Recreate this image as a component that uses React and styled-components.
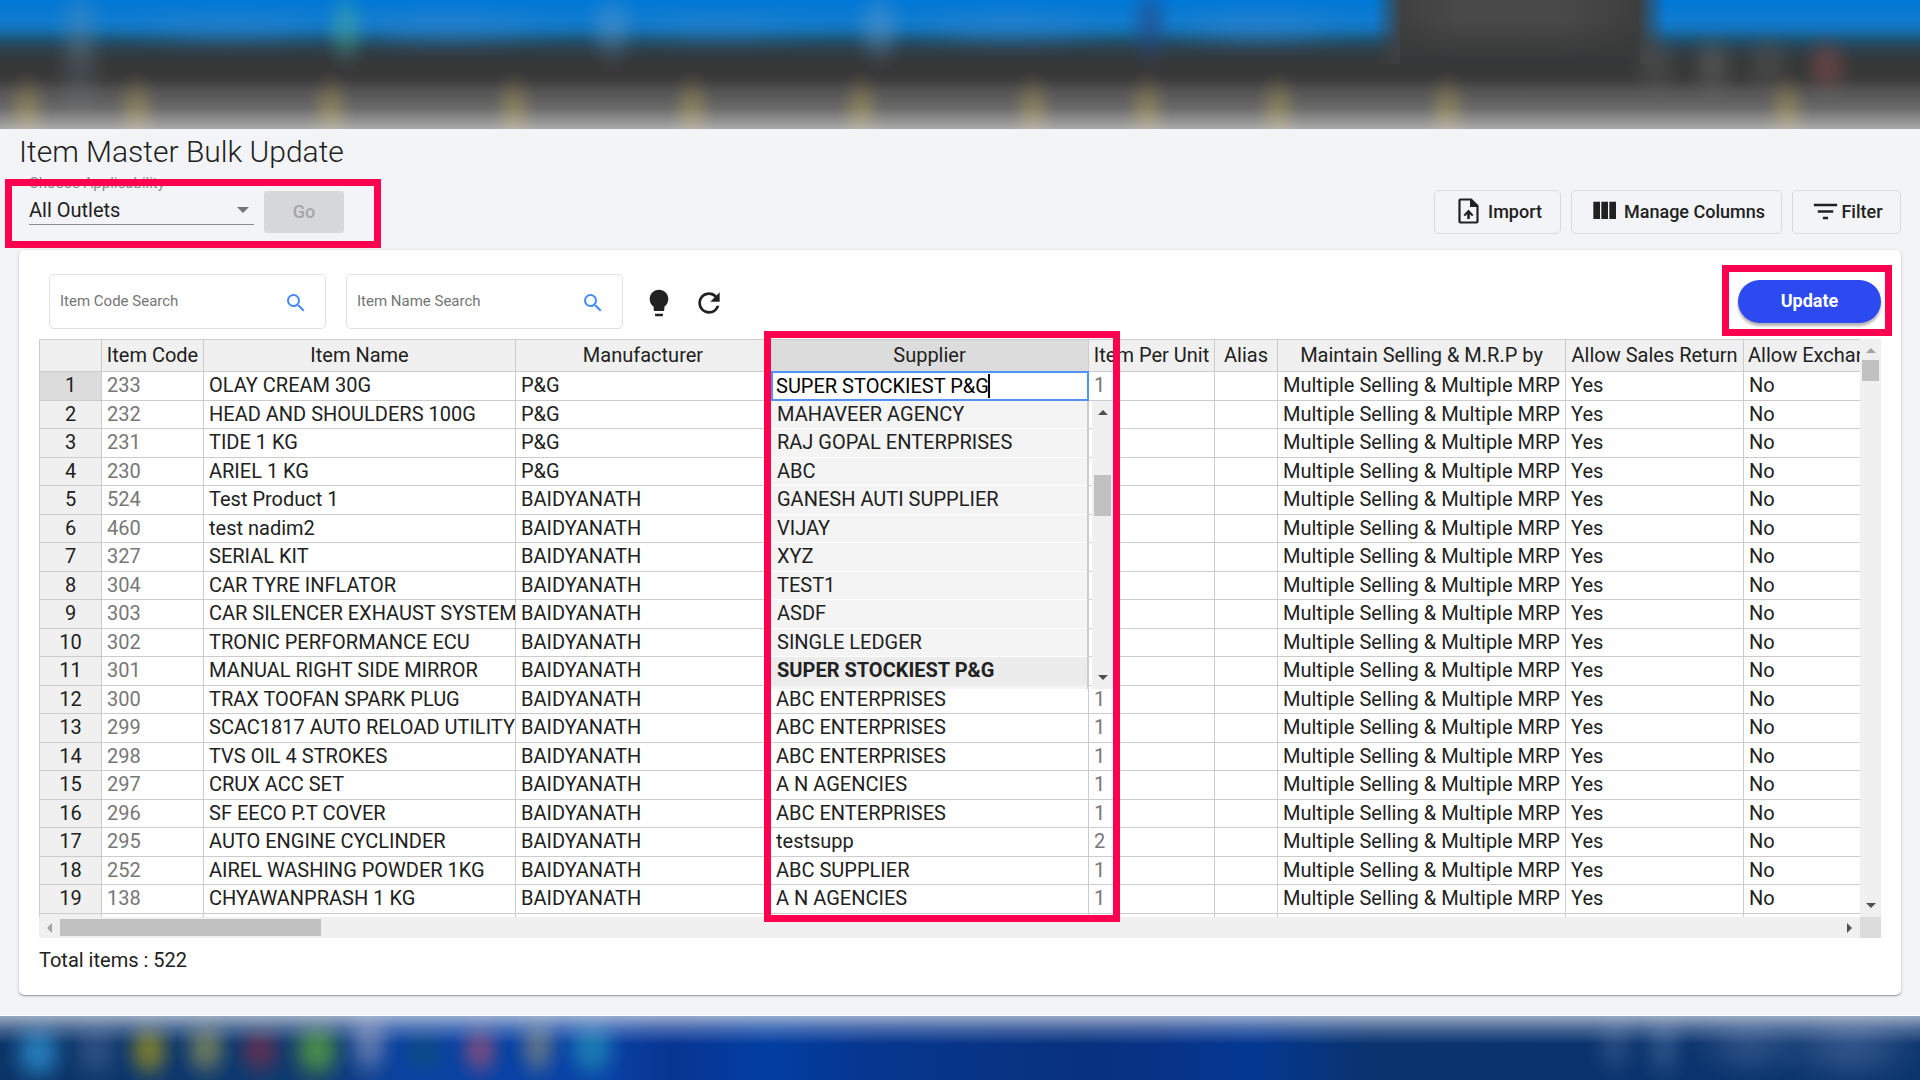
import React from 'react';
import styled, { createGlobalStyle, css } from 'styled-components';
import { MdSearch, MdRefresh, MdFilterList } from 'react-icons/md';

const GlobalStyle = createGlobalStyle`
  *, *::before, *::after { box-sizing: border-box; }
  body {
    margin: 0;
    background: #f3f4f7;
    color: #212121;
    font-family: Roboto, "Liberation Sans", sans-serif;
    font-size: 20px;
  }
  button, input, select { font-family: inherit; margin: 0; }
`;

const glow = (x, y, rx, ry, color) =>
  `radial-gradient(ellipse ${rx}px ${ry}px at ${x}px ${y}px, ${color} 0%, color-mix(in srgb, ${color} 80%, transparent) 30%, color-mix(in srgb, ${color} 25%, transparent) 70%, transparent 100%)`;

const bookmarks = [27, 137, 331, 514, 692, 861, 1033, 1147, 1278, 1447, 1787]
  .map((x) => glow(x, 112, 24, 42, 'rgba(145, 125, 55, 0.52)'))
  .join(',');

const tabGlows = [
  glow(80, 40, 30, 80, 'rgba(120, 150, 170, 0.28)'),
  glow(346, 28, 26, 46, 'rgba(80, 180, 150, 0.4)'),
  glow(612, 28, 30, 44, 'rgba(110, 155, 200, 0.36)'),
  glow(879, 28, 30, 44, 'rgba(110, 155, 200, 0.4)'),
  glow(1150, 24, 26, 50, 'rgba(40, 70, 130, 0.55)'),
  glow(230, 28, 130, 30, 'rgba(70, 140, 210, 0.22)'),
  glow(450, 28, 130, 30, 'rgba(70, 140, 210, 0.28)'),
  glow(720, 28, 120, 30, 'rgba(70, 140, 210, 0.18)'),
  glow(1010, 28, 120, 30, 'rgba(70, 140, 210, 0.26)'),
  glow(1260, 28, 110, 30, 'rgba(70, 140, 210, 0.3)'),
  glow(1656, 62, 28, 38, 'rgba(110, 110, 110, 0.26)'),
  glow(1713, 64, 28, 38, 'rgba(120, 120, 120, 0.34)'),
  glow(1768, 62, 28, 38, 'rgba(110, 110, 110, 0.26)'),
  glow(1827, 66, 28, 36, 'rgba(140, 80, 80, 0.48)'),
].join(',');

const BrowserHaze = styled.div`
  height: 129px;
  background:
    linear-gradient(to bottom, transparent 80px, rgba(255, 255, 255, 0.18) 108px, rgba(255, 255, 255, 0.52) 129px),
    ${tabGlows},
    ${bookmarks},
    linear-gradient(to bottom, transparent 20px, #353637 64px) 1400px 0 / 240px 64px no-repeat,
    linear-gradient(to right, transparent 1374px, #404040 1402px, #494949 1460px, #494949 1560px, #3e3e3e 1638px, transparent 1666px) 0 0 / 100% 64px no-repeat,
    linear-gradient(to bottom, #0078d7 0, #0f7bcf 20px, #1272b9 29px, #20516f 41px, #2e3f4b 50px, #353738 62px, #383838 72px, #474747 92px, #4c4c4c 129px);
`;

const taskIcons = [
  glow(38, 36, 34, 40, 'rgba(45, 145, 210, 0.75)'),
  glow(96, 34, 32, 38, 'rgba(90, 110, 160, 0.4)'),
  glow(149, 34, 30, 38, 'rgba(150, 140, 35, 0.75)'),
  glow(206, 32, 30, 38, 'rgba(150, 150, 90, 0.65)'),
  glow(260, 34, 30, 34, 'rgba(120, 45, 75, 0.68)'),
  glow(317, 34, 34, 40, 'rgba(90, 165, 60, 0.75)'),
  glow(369, 26, 30, 44, 'rgba(130, 145, 190, 0.65)'),
  glow(424, 34, 30, 30, 'rgba(15, 80, 120, 0.6)'),
  glow(480, 34, 28, 36, 'rgba(150, 80, 120, 0.7)'),
  glow(538, 30, 28, 40, 'rgba(120, 130, 130, 0.7)'),
  glow(592, 32, 34, 40, 'rgba(35, 145, 185, 0.7)'),
  glow(1615, 28, 28, 40, 'rgba(80, 110, 160, 0.35)'),
  glow(1664, 28, 28, 44, 'rgba(80, 110, 160, 0.45)'),
  glow(1750, 28, 64, 40, 'rgba(80, 110, 160, 0.45)'),
  glow(1850, 28, 80, 48, 'rgba(80, 110, 160, 0.55)'),
].join(',');

const TaskbarHaze = styled.footer`
  height: 65px;
  border-top: 1px solid #fff;
  background:
    linear-gradient(to bottom, rgba(205, 213, 225, 0.72) 0, rgba(190, 200, 225, 0.35) 13px, transparent 28px),
    ${taskIcons},
    linear-gradient(to right, #0b3569 0, #103b70 320px, #0a42a0 400px, #0842a6 600px, #083592 670px, #023ea3 770px, #06368f 870px, #08327e 1080px, #083286 1160px, #033893 1250px, #0a336e 1370px, #0b356d 1920px);
`;

const Page = styled.main`
  padding: 5px 19px 20px;
`;

const Title = styled.h1`
  margin: 0 0 2px;
  font-size: 30px;
  line-height: 36px;
  font-weight: 300;
`;

const ActionBar = styled.div`
  display: flex;
  justify-content: space-between;
  align-items: flex-end;
  padding: 0 0 16px;
`;

const Applicability = styled.div`
  position: relative;
  display: flex;
  align-items: flex-end;
  gap: 10px;
  padding: 0 0 1px 10px;
`;

const SelectField = styled.div`
  position: relative;
  width: 225px;
  height: 53px;
  margin-bottom: 8px;
  display: flex;
  flex-direction: column;
  justify-content: space-between;
  border-bottom: 1px solid #8b8c8e;

  &::after {
    content: '';
    position: absolute;
    right: 5px;
    bottom: 11px;
    border: 6px solid transparent;
    border-top-color: #757575;
    border-bottom: 0;
  }
`;

const SelectLabel = styled.label`
  font-size: 15px;
  line-height: 22px;
  color: #8c8c8e;
`;

const Select = styled.select`
  appearance: none;
  width: 100%;
  height: 28px;
  padding: 0;
  border: 0;
  background: transparent;
  color: #212121;
  font-size: 20px;
`;

const Callout = styled.div`
  position: absolute;
  z-index: 5;
  border: 7px solid #ff0050;
  pointer-events: none;
  top: ${(p) => p.$top}px;
  left: ${(p) => p.$left}px;
  width: ${(p) => p.$width}px;
  height: ${(p) => p.$height}px;
`;

const GoButton = styled.button`
  width: 80px;
  height: 42px;
  padding: 0 0 2px;
  border: 0;
  border-radius: 4px;
  background: #d6d7d9;
  color: #a4a5a7;
  font-size: 18px;
  font-weight: 500;
`;

const Actions = styled.div`
  display: flex;
  gap: 10px;
`;

const OutlineButton = styled.button`
  display: flex;
  align-items: center;
  justify-content: center;
  gap: ${(p) => p.$gap}px;
  height: 44px;
  width: ${(p) => p.$width}px;
  padding: 0 0 2px ${(p) => p.$inset || 0}px;
  border: 1px solid #d8d9dc;
  border-radius: 5px;
  background: transparent;
  color: #212121;
  font-size: 18px;
  font-weight: 500;
`;

const Card = styled.section`
  padding: 24px 20px 20px;
  border-radius: 5px;
  background: #fff;
  box-shadow: 0 1px 1px rgba(0, 0, 0, 0.3), 0 1px 4px rgba(0, 0, 0, 0.14);
`;

const Toolbar = styled.div`
  display: flex;
  align-items: center;
  height: 55px;
  margin-bottom: 10px;
  padding-left: 10px;
`;

const SearchBox = styled.label`
  display: flex;
  align-items: center;
  width: 277px;
  height: 55px;
  margin-right: 20px;
  padding: 0 17px 0 10px;
  border: 1px solid #e0e0e0;
  border-radius: 5px;
  color: #448aff;

  input {
    flex: 1;
    min-width: 0;
    padding: 0 0 2px;
    border: 0;
    outline: 0;
    background: transparent;
    font-size: 15px;
    color: #212121;
  }
  input::placeholder { color: #757575; opacity: 1; }
  svg { margin-top: 2px; }
`;

const IconButton = styled.button`
  display: flex;
  padding: 2px 0 0;
  margin-right: 18px;
  border: 0;
  background: transparent;
  color: #212121;
`;

const UpdateSlot = styled.div`
  position: relative;
  margin-left: auto;
`;

const UpdateButton = styled.button`
  display: block;
  width: 143px;
  height: 43px;
  padding: 0 0 2px;
  border: 0;
  border-radius: 22px;
  background: #2d49f0;
  color: #fff;
  font-size: 18px;
  font-weight: 700;
  box-shadow: 0 3px 3px rgba(0, 0, 0, 0.3);
`;

const GridShell = styled.div`
  position: relative;
  display: grid;
  grid-template-columns: minmax(0, 1fr) 21px;
  grid-template-rows: 578px 21px;
`;

const Viewport = styled.div`
  overflow: hidden;
  border: solid #ccc;
  border-width: 1px 0 0 1px;
`;

const Table = styled.table`
  width: 1847px;
  table-layout: fixed;
  border-collapse: separate;
  border-spacing: 0;
  line-height: 24px;
`;

const cell = css`
  padding: 0 0 2px 5px;
  border: solid #ccc;
  border-width: 0 1px 1px 0;
  font-weight: 400;
  white-space: nowrap;
  overflow: hidden;
`;

const HeadCell = styled.th`
  ${cell}
  padding: 0 4px 2px;
  height: 32px;
  background: ${(p) => (p.$active ? '#dcdcdc' : '#f0f0f0')};
`;

const RowHead = styled.th`
  ${cell}
  padding: 0 0 2px;
  background: ${(p) => (p.$active ? '#dcdcdc' : '#f0f0f0')};
`;

const Cell = styled.td`
  ${cell}
  color: ${(p) => (p.$muted ? '#777' : '#212121')};
`;

const EditingCell = styled.td`
  ${cell}
  position: relative;
  overflow: visible;
  padding: 0;
`;

const Row = styled.tr`
  height: 28px;
  &:nth-child(odd) { height: 29px; }
`;

const CellEditor = styled.input`
  position: absolute;
  inset: -1px -1px -1px 0;
  width: 318px;
  height: 30px;
  padding: 0 3px;
  border: 2px solid #5292f7;
  outline: 0;
  background: #fff;
  color: #000;
  caret-color: transparent;
  font-size: 20px;
`;

const Caret = styled.span`
  position: absolute;
  top: 2px;
  left: 217px;
  width: 2px;
  height: 24px;
  background: #000;
`;

const Dropdown = styled.div`
  position: absolute;
  z-index: 3;
  top: 29px;
  left: 0;
  display: flex;
  gap: 3px;
`;

const Options = styled.ul`
  width: 318px;
  margin: 0;
  padding: 0 0 3px;
  list-style: none;
  background: #f4f4f4;
  border-right: 2px solid #ccc;
`;

const Option = styled.li`
  height: 29px;
  padding: 1px 6px 0;
  line-height: 24px;
  border-bottom: 1px solid ${(p) => (p.$selected ? '#ececec' : '#fff')};
  background: ${(p) => (p.$selected ? '#ececec' : '#f4f4f4')};
  font-weight: ${(p) => (p.$selected ? 700 : 400)};
  &:nth-child(odd) { height: 28px; }
`;

const Track = styled.div`
  display: flex;
  flex-direction: ${(p) => (p.$horizontal ? 'row' : 'column')};
  align-items: center;
  justify-content: space-between;
  background: #f0f0f0;
  ${(p) => (p.$horizontal ? 'padding: 0 8px;' : 'width: 21px; padding: 9px 0;')}
`;

const Thumb = styled.div`
  background: #c1c1c1;
  width: ${(p) => p.$width}px;
  height: ${(p) => p.$height}px;
  margin: ${(p) => p.$margin};
`;

const arrows = {
  up: 'border-width: 0 5px 5px; border-bottom-color: currentColor;',
  down: 'border-width: 5px 5px 0; border-top-color: currentColor;',
  left: 'border-width: 5px 5px 5px 0; border-right-color: currentColor;',
  right: 'border-width: 5px 0 5px 5px; border-left-color: currentColor;',
};

const Arrow = styled.span`
  width: 0;
  height: 0;
  color: ${(p) => (p.$dim ? '#a3a3a3' : '#505050')};
  border: 0 solid transparent;
  ${(p) => arrows[p.$dir]}
`;

const Corner = styled.div`
  background: #dcdcdc;
`;

const Total = styled.p`
  margin: 8px 0 1px;
  line-height: 28px;
`;

const columns = [
  ['', 62],
  ['Item Code', 102],
  ['Item Name', 312],
  ['Manufacturer', 255],
  ['Supplier', 318],
  ['Item Per Unit', 126],
  ['Alias', 63],
  ['Maintain Selling & M.R.P by', 288],
  ['Allow Sales Return', 178],
  ['Allow Exchange', 143],
];

const items = [
  ['233', 'OLAY CREAM 30G', 'P&G', 'SUPER STOCKIEST P&G', '1'],
  ['232', 'HEAD AND SHOULDERS 100G', 'P&G', '', ''],
  ['231', 'TIDE 1 KG', 'P&G', '', ''],
  ['230', 'ARIEL 1 KG', 'P&G', '', ''],
  ['524', 'Test Product 1', 'BAIDYANATH', '', ''],
  ['460', 'test nadim2', 'BAIDYANATH', '', ''],
  ['327', 'SERIAL KIT', 'BAIDYANATH', '', ''],
  ['304', 'CAR TYRE INFLATOR', 'BAIDYANATH', '', ''],
  ['303', 'CAR SILENCER EXHAUST SYSTEM', 'BAIDYANATH', '', ''],
  ['302', 'TRONIC PERFORMANCE ECU', 'BAIDYANATH', '', ''],
  ['301', 'MANUAL RIGHT SIDE MIRROR', 'BAIDYANATH', '', ''],
  ['300', 'TRAX TOOFAN SPARK PLUG', 'BAIDYANATH', 'ABC ENTERPRISES', '1'],
  ['299', 'SCAC1817 AUTO RELOAD UTILITY', 'BAIDYANATH', 'ABC ENTERPRISES', '1'],
  ['298', 'TVS OIL 4 STROKES', 'BAIDYANATH', 'ABC ENTERPRISES', '1'],
  ['297', 'CRUX ACC SET', 'BAIDYANATH', 'A N AGENCIES', '1'],
  ['296', 'SF EECO P.T COVER', 'BAIDYANATH', 'ABC ENTERPRISES', '1'],
  ['295', 'AUTO ENGINE CYCLINDER', 'BAIDYANATH', 'testsupp', '2'],
  ['252', 'AIREL WASHING POWDER 1KG', 'BAIDYANATH', 'ABC SUPPLIER', '1'],
  ['138', 'CHYAWANPRASH 1 KG', 'BAIDYANATH', 'A N AGENCIES', '1'],
];

const suppliers = [
  'MAHAVEER AGENCY',
  'RAJ GOPAL ENTERPRISES',
  'ABC',
  'GANESH AUTI SUPPLIER',
  'VIJAY',
  'XYZ',
  'TEST1',
  'ASDF',
  'SINGLE LEDGER',
  'SUPER STOCKIEST P&G',
];

const ImportIcon = () => (
  <svg width="21" height="26" viewBox="0 0 21 26" fill="none" aria-hidden="true">
    <path d="M2.5 1.5H13l6.5 6.5v15.5a1 1 0 0 1-1 1h-16a1 1 0 0 1-1-1v-21a1 1 0 0 1 1-1z" stroke="currentColor" strokeWidth="2.2" />
    <path d="M12 1h1.5L20 7.5V9h-8z" fill="currentColor" />
    <path d="M10.5 21v-7" stroke="currentColor" strokeWidth="2.6" />
    <path d="M10.5 11.5l5 5.5-1.5 1.2-3.5-3.2-3.5 3.2-1.5-1.2z" fill="currentColor" />
  </svg>
);

const ColumnsIcon = () => (
  <svg width="32" height="32" viewBox="0 0 24 24" fill="currentColor" aria-hidden="true">
    <path d="M10 18h5V5h-5v13zm-6 0h5V5H4v13zM16 5v13h5V5h-5z" />
  </svg>
);

const BulbIcon = () => (
  <svg width="32" height="32" viewBox="0 0 24 24" fill="currentColor" aria-hidden="true">
    <path d="M9 21c0 .55.45 1 1 1h4c.55 0 1-.45 1-1v-1H9v1zm3-19C8.14 2 5 5.14 5 9c0 2.38 1.19 4.47 3 5.74V17c0 .55.45 1 1 1h6c.55 0 1-.45 1-1v-2.26c1.81-1.27 3-3.36 3-5.74 0-3.86-3.14-7-7-7z" />
  </svg>
);

function SupplierEditor({ value }) {
  return (
    <EditingCell>
      <CellEditor aria-label="Supplier" defaultValue={value} />
      <Caret />
      <Dropdown>
        <Options role="listbox" aria-label="Suppliers">
          {suppliers.map((name) => (
            <Option key={name} role="option" aria-selected={name === value} $selected={name === value}>
              {name}
            </Option>
          ))}
        </Options>
        <Track>
          <Arrow $dir="up" />
          <Thumb $width={17} $height={41} $margin="0 0 100px" />
          <Arrow $dir="down" />
        </Track>
      </Dropdown>
    </EditingCell>
  );
}

export default function App() {
  return (
    <>
      <GlobalStyle />
      <BrowserHaze />
      <Page>
        <Title>Item Master Bulk Update</Title>
        <ActionBar>
          <Applicability>
            <SelectField>
              <SelectLabel htmlFor="outlet">Choose Applicability</SelectLabel>
              <Select id="outlet" defaultValue="all">
                <option value="all">All Outlets</option>
              </Select>
            </SelectField>
            <GoButton disabled>Go</GoButton>
            <Callout $top={7} $left={-14} $width={376} $height={69} />
          </Applicability>
          <Actions>
            <OutlineButton $width={127} $gap={9} $inset={5}>
              <ImportIcon />
              Import
            </OutlineButton>
            <OutlineButton $width={211} $gap={4}>
              <ColumnsIcon />
              Manage Columns
            </OutlineButton>
            <OutlineButton $width={109} $gap={0}>
              <MdFilterList size={31} />
              Filter
            </OutlineButton>
          </Actions>
        </ActionBar>
        <Card>
          <Toolbar>
            <SearchBox>
              <input type="text" placeholder="Item Code Search" aria-label="Item Code Search" />
              <MdSearch size={24} />
            </SearchBox>
            <SearchBox>
              <input type="text" placeholder="Item Name Search" aria-label="Item Name Search" />
              <MdSearch size={24} />
            </SearchBox>
            <IconButton aria-label="Tips">
              <BulbIcon />
            </IconButton>
            <IconButton aria-label="Refresh">
              <MdRefresh size={32} />
            </IconButton>
            <UpdateSlot>
              <UpdateButton>Update</UpdateButton>
              <Callout $top={-15} $left={-16} $width={170} $height={71} />
            </UpdateSlot>
          </Toolbar>
          <GridShell>
            <Viewport>
              <Table>
                <colgroup>
                  {columns.map(([name, width]) => (
                    <col key={name} style={{ width }} />
                  ))}
                </colgroup>
                <thead>
                  <tr>
                    {columns.map(([name]) => (
                      <HeadCell key={name} $active={name === 'Supplier'}>
                        {name}
                      </HeadCell>
                    ))}
                  </tr>
                </thead>
                <tbody>
                  {items.map(([code, name, maker, supplier, perUnit], i) => (
                    <Row key={code}>
                      <RowHead $active={i === 0}>{i + 1}</RowHead>
                      <Cell $muted>{code}</Cell>
                      <Cell>{name}</Cell>
                      <Cell>{maker}</Cell>
                      {i === 0 ? <SupplierEditor value={supplier} /> : <Cell>{supplier}</Cell>}
                      <Cell $muted>{perUnit}</Cell>
                      <Cell />
                      <Cell>Multiple Selling &amp; Multiple MRP</Cell>
                      <Cell>Yes</Cell>
                      <Cell>No</Cell>
                    </Row>
                  ))}
                  <Row>
                    <RowHead />
                    {columns.slice(1).map(([name]) => (
                      <Cell key={name} />
                    ))}
                  </Row>
                </tbody>
              </Table>
            </Viewport>
            <Track>
              <Arrow $dir="up" $dim />
              <Thumb $width={17} $height={21} $margin="7px 0 auto" />
              <Arrow $dir="down" />
            </Track>
            <Track $horizontal>
              <Arrow $dir="left" $dim />
              <Thumb $width={261} $height={17} $margin="0 auto 0 8px" />
              <Arrow $dir="right" />
            </Track>
            <Corner />
            <Callout $top={-8} $left={725} $width={356} $height={591} />
          </GridShell>
          <Total>Total items : 522</Total>
        </Card>
      </Page>
      <TaskbarHaze />
    </>
  );
}
